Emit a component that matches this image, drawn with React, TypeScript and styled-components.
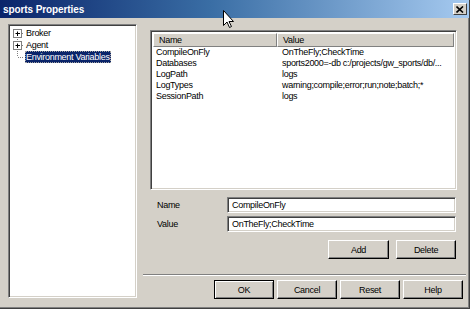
import styled, { createGlobalStyle } from "styled-components";

const GlobalStyle = createGlobalStyle`
  html, body {
    margin: 0;
    padding: 0;
    background: #d4d0c8;
  }
  body {
    font-family: "Liberation Sans", Arial, sans-serif;
    font-size: 9px;
    letter-spacing: -0.3px;
    color: #000;
  }
`;

const Window = styled.div`
  position: relative;
  width: 470px;
  height: 309px;
  box-sizing: border-box;
  background: #d4d0c8;
  border-right: 1px solid #404040;
  border-bottom: 1px solid #404040;
  box-shadow: inset -1px -1px 0 #808080;
  display: flex;
  flex-direction: column;
  overflow: hidden;
`;

const TitleBar = styled.div`
  flex: none;
  height: 18px;
  display: flex;
  align-items: center;
  justify-content: space-between;
  padding: 0 2px 0 3px;
  background: linear-gradient(to right, #0a246a 0%, #3a6ea5 45%, #a6caf0 100%);
  color: #fff;
  font-weight: bold;
  font-size: 10px;
  letter-spacing: -0.1px;
`;

const CloseButton = styled.div`
  width: 14px;
  height: 12px;
  box-sizing: border-box;
  background: #d4d0c8;
  border-top: 1px solid #fff;
  border-left: 1px solid #fff;
  border-right: 1px solid #404040;
  border-bottom: 1px solid #404040;
  display: flex;
  align-items: center;
  justify-content: center;
`;

const Body = styled.div`
  flex: 1;
  display: flex;
  padding: 6px 0 0 8px;
`;

const Sunken = styled.div`
  box-sizing: border-box;
  background: #fff;
  border-top: 1px solid #808080;
  border-left: 1px solid #808080;
  border-right: 1px solid #fff;
  border-bottom: 1px solid #fff;
  box-shadow: inset 1px 1px 0 #404040, inset -1px -1px 0 #d4d0c8;
`;

const TreePanel = styled(Sunken)`
  width: 129px;
  height: 274px;
  padding: 2px 0 0 3px;
`;

const TreeRow = styled.div`
  height: 12px;
  display: flex;
  align-items: center;
`;

const TreeLabel = styled.span<{ selected?: boolean }>`
  margin-left: 1px;
  padding: 0 1px;
  line-height: 12px;
  white-space: nowrap;
  background: ${({ selected }) => (selected ? "#0a246a" : "transparent")};
  color: ${({ selected }) => (selected ? "#fff" : "#000")};
  outline: ${({ selected }) => (selected ? "1px dotted #a0a0a0" : "none")};
  outline-offset: -1px;
`;

const RightColumn = styled.div`
  margin-left: 6px;
  width: 323px;
  display: flex;
  flex-direction: column;
`;

const ListView = styled(Sunken)`
  margin: 6px 0 0 7px;
  width: 307px;
  height: 160px;
  padding: 2px;
`;

const HeaderRow = styled.div`
  display: flex;
  height: 14px;
`;

const HeaderCell = styled.div<{ width?: number }>`
  box-sizing: border-box;
  ${({ width }) => (width ? `width: ${width}px; flex: none;` : "flex: 1;")}
  background: #d4d0c8;
  border-top: 1px solid #fff;
  border-left: 1px solid #fff;
  border-right: 1px solid #808080;
  border-bottom: 1px solid #808080;
  padding-left: 5px;
  line-height: 12px;
`;

const ListRow = styled.div`
  display: flex;
  height: 11px;
  line-height: 11px;
  white-space: nowrap;
  &:first-of-type {
    margin-top: 1px;
  }
`;

const ListCell = styled.div<{ width?: number }>`
  ${({ width }) => (width ? `width: ${width}px; flex: none;` : "flex: 1;")}
  padding-left: ${({ width }) => (width ? "3px" : "5px")};
  box-sizing: border-box;
  overflow: hidden;
`;

const FieldGrid = styled.div`
  margin-top: 7px;
  display: grid;
  grid-template-columns: 70px 229px;
  row-gap: 3px;
  padding-left: 14px;
  align-items: center;
`;

const FieldLabel = styled.label`
  line-height: 16px;
`;

const TextInput = styled(Sunken)`
  height: 16px;
  padding-left: 4px;
  line-height: 14px;
  white-space: nowrap;
`;

const ButtonRow = styled.div<{ top: number; right: number; gap: number }>`
  display: flex;
  justify-content: flex-end;
  gap: ${({ gap }) => gap}px;
  margin-top: ${({ top }) => top}px;
  padding-right: ${({ right }) => right}px;
`;

const Button = styled.div<{ width: number; isDefault?: boolean }>`
  box-sizing: border-box;
  width: ${({ width }) => width}px;
  height: 19px;
  display: flex;
  align-items: center;
  justify-content: center;
  background: #d4d0c8;
  border-top: 1px solid ${({ isDefault }) => (isDefault ? "#000" : "#fff")};
  border-left: 1px solid ${({ isDefault }) => (isDefault ? "#000" : "#fff")};
  border-right: 1px solid #000;
  border-bottom: 1px solid #000;
  box-shadow: ${({ isDefault }) =>
    isDefault
      ? "inset 1px 1px 0 #fff, inset -1px -1px 0 #808080"
      : "inset -1px -1px 0 #808080"};
`;

const Separator = styled.div`
  margin-top: 15px;
  height: 0;
  border-top: 1px solid #808080;
  border-bottom: 1px solid #fff;
`;

const Cursor = styled.svg`
  position: absolute;
  left: 223px;
  top: 10px;
`;

const TreeGutter = ({ box, first, last }: { box: boolean; first?: boolean; last?: boolean }) => (
  <svg width="12" height="12" viewBox="0 0 12 12" style={{ flex: "none" }}>
    <line x1="5.5" y1={first ? 6 : 0} x2="5.5" y2={last ? 6 : 12} stroke="#808080" strokeDasharray="1 1" />
    <line x1="6" y1="6.5" x2="12" y2="6.5" stroke="#808080" strokeDasharray="1 1" />
    {box && (
      <>
        <rect x="1.5" y="2.5" width="8" height="8" fill="#fff" stroke="#808080" />
        <line x1="3.5" y1="6.5" x2="8" y2="6.5" stroke="#000" />
        <line x1="5.5" y1="4.5" x2="5.5" y2="9" stroke="#000" />
      </>
    )}
  </svg>
);

const rows = [
  ["CompileOnFly", "OnTheFly;CheckTime"],
  ["Databases", "sports2000=-db c:/projects/gw_sports/db/..."],
  ["LogPath", "logs"],
  ["LogTypes", "warning;compile;error;run;note;batch;*"],
  ["SessionPath", "logs"],
];

export default function App() {
  return (
    <>
      <GlobalStyle />
      <Window>
        <TitleBar>
          <span>sports Properties</span>
          <CloseButton>
            <svg width="8" height="7" viewBox="0 0 8 7">
              <path d="M0.5 0.5 L7 6.5 M7 0.5 L0.5 6.5" stroke="#000" strokeWidth="1.6" />
            </svg>
          </CloseButton>
        </TitleBar>
        <Body>
          <TreePanel>
            <TreeRow>
              <TreeGutter box first />
              <TreeLabel>Broker</TreeLabel>
            </TreeRow>
            <TreeRow>
              <TreeGutter box />
              <TreeLabel>Agent</TreeLabel>
            </TreeRow>
            <TreeRow>
              <TreeGutter box={false} last />
              <TreeLabel selected>Environment Variables</TreeLabel>
            </TreeRow>
          </TreePanel>
          <RightColumn>
            <ListView>
              <HeaderRow>
                <HeaderCell width={124}>Name</HeaderCell>
                <HeaderCell>Value</HeaderCell>
              </HeaderRow>
              {rows.map(([name, value]) => (
                <ListRow key={name}>
                  <ListCell width={124}>{name}</ListCell>
                  <ListCell>{value}</ListCell>
                </ListRow>
              ))}
            </ListView>
            <FieldGrid>
              <FieldLabel>Name</FieldLabel>
              <TextInput>CompileOnFly</TextInput>
              <FieldLabel>Value</FieldLabel>
              <TextInput>OnTheFly;CheckTime</TextInput>
            </FieldGrid>
            <ButtonRow top={8} right={10} gap={7}>
              <Button width={61}>Add</Button>
              <Button width={60}>Delete</Button>
            </ButtonRow>
            <Separator />
            <ButtonRow top={4} right={3} gap={3}>
              <Button width={60} isDefault>OK</Button>
              <Button width={60}>Cancel</Button>
              <Button width={60}>Reset</Button>
              <Button width={60}>Help</Button>
            </ButtonRow>
          </RightColumn>
        </Body>
        <Cursor width="12" height="19" viewBox="0 0 12 19">
          <path d="M0.5 0.5 L0.5 15.5 L4 12 L6.5 17.5 L8.5 16.5 L6 11.5 L10.5 11.5 Z" fill="#fff" stroke="#000" />
        </Cursor>
      </Window>
    </>
  );
}
